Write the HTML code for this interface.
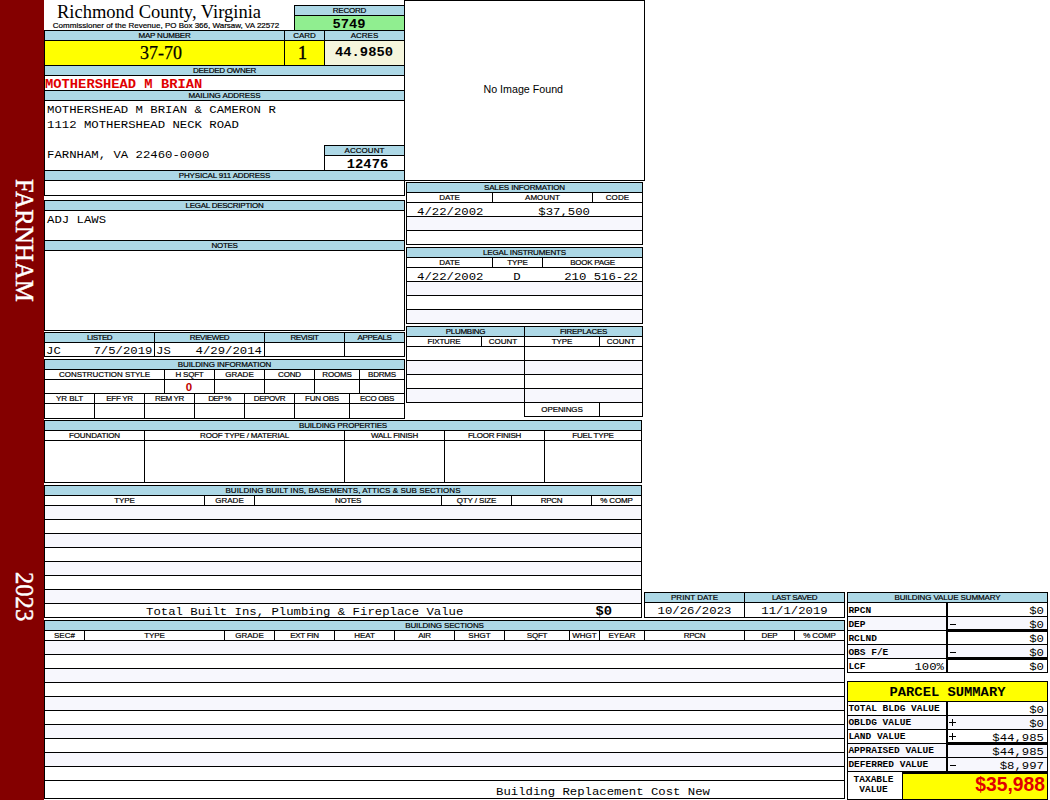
<!DOCTYPE html>
<html><head><meta charset="utf-8"><title>Property Card</title>
<style>
html,body{margin:0;padding:0;background:#fff;}
body{width:1050px;height:800px;position:relative;overflow:hidden;font-family:"Liberation Sans",sans-serif;}
.b{position:absolute;box-sizing:border-box;border:1px solid #000;overflow:hidden;}
.l{font-family:"Liberation Sans",sans-serif;font-size:8px;-webkit-text-stroke:.2px #000;padding-top:.15px;text-align:center;color:#000;white-space:nowrap;}
.t{position:absolute;white-space:pre;color:#000;line-height:1.15;}
.m{font-family:"Liberation Mono",monospace;font-size:12.3px;transform:translateY(1.8px) scaleY(.9);transform-origin:50% 45%;}
.mb{font-family:"Liberation Mono",monospace;font-weight:bold;transform:translateY(1px) scaleY(.86);transform-origin:50% 45%;}
.sb{font-family:"Liberation Mono",monospace;font-weight:bold;font-size:9.5px;}
.s{font-family:"Liberation Serif",serif;}
.a{font-family:"Liberation Sans",sans-serif;}
.ab{font-family:"Liberation Sans",sans-serif;font-weight:bold;}
.v{position:absolute;writing-mode:vertical-rl;font-family:"Liberation Serif",serif;font-size:24.6px;-webkit-text-stroke:.45px #fff;color:#fff;line-height:1;white-space:nowrap;}
.k{position:absolute;background:#000;}
</style></head>
<body>
<div style="position:absolute;left:0;top:0;width:44px;height:800px;background:#840000"></div>
<div class="v" style="left:11.2px;top:179.2px;letter-spacing:.3px;">FARNHAM</div>
<div class="v" style="left:11.2px;top:571.6px;">2023</div>
<div class="t s" style="left:44px;width:230px;text-align:center;top:2.3px;font-size:18.5px;">Richmond County, Virginia</div>
<div class="t a" style="left:44px;width:244px;text-align:center;top:20.5px;font-size:8px;-webkit-text-stroke:.2px #000;">Commissioner of the Revenue, PO Box 366, Warsaw, VA 22572</div>
<div class="b l" style="left:294px;top:5px;width:111px;height:11px;background:#add8e6;line-height:9px;letter-spacing:-0.22px;">RECORD</div>
<div class="b " style="left:294px;top:15px;width:111px;height:16px;background:#90ee90;"></div>
<div class="t mb" style="left:294px;width:110px;text-align:center;top:17px;font-size:13.8px;">5749</div>
<div class="b l" style="left:44px;top:30px;width:241px;height:11px;background:#add8e6;line-height:9px;letter-spacing:-0.21px;">MAP NUMBER</div>
<div class="b l" style="left:284px;top:30px;width:41px;height:11px;background:#add8e6;line-height:9px;letter-spacing:-0.07px;">CARD</div>
<div class="b l" style="left:324px;top:30px;width:81px;height:11px;background:#add8e6;line-height:9px;letter-spacing:-0.04px;">ACRES</div>
<div class="b " style="left:44px;top:40px;width:241px;height:26px;background:#ffff00;"></div>
<div class="b " style="left:284px;top:40px;width:41px;height:26px;background:#ffff00;"></div>
<div class="b " style="left:324px;top:40px;width:81px;height:26px;background:#f5f5dc;"></div>
<div class="t s" style="left:41px;width:240px;text-align:center;top:42.5px;font-size:18px;-webkit-text-stroke:.25px #000;">37-70</div>
<div class="t s" style="left:282.5px;width:40.0px;text-align:center;top:42.5px;font-size:18px;-webkit-text-stroke:.5px #000;">1</div>
<div class="t mb" style="left:324px;width:80px;text-align:center;top:45px;font-size:13.8px;">44.9850</div>
<div class="b l" style="left:44px;top:65px;width:361px;height:11px;background:#add8e6;line-height:9px;letter-spacing:-0.28px;">DEEDED OWNER</div>
<div class="b " style="left:44px;top:75px;width:361px;height:16px;background:#fff;"></div>
<div class="t mb" style="left:45px;top:77px;color:#e00000;font-size:13.8px;">MOTHERSHEAD M BRIAN</div>
<div class="b l" style="left:44px;top:90px;width:361px;height:11px;background:#add8e6;line-height:9px;letter-spacing:-0.09px;">MAILING ADDRESS</div>
<div class="b " style="left:44px;top:100px;width:361px;height:71px;background:#fff;"></div>
<div class="t m" style="left:47px;top:102px;">MOTHERSHEAD M BRIAN &amp; CAMERON R</div>
<div class="t m" style="left:47px;top:117px;">1112 MOTHERSHEAD NECK ROAD</div>
<div class="t m" style="left:47px;top:147px;">FARNHAM, VA 22460-0000</div>
<div class="b l" style="left:324px;top:145px;width:81px;height:11px;background:#add8e6;line-height:9px;letter-spacing:0.06px;">ACCOUNT</div>
<div class="b " style="left:324px;top:155px;width:81px;height:16px;background:#fff;"></div>
<div class="t mb" style="left:327.5px;width:80.0px;text-align:center;top:157px;font-size:13.8px;">12476</div>
<div class="b l" style="left:44px;top:170px;width:361px;height:11px;background:#add8e6;line-height:9px;letter-spacing:-0.17px;">PHYSICAL 911 ADDRESS</div>
<div class="b " style="left:44px;top:180px;width:361px;height:16px;background:#fff;"></div>
<div class="b l" style="left:44px;top:200px;width:361px;height:11px;background:#add8e6;line-height:9px;letter-spacing:-0.26px;">LEGAL DESCRIPTION</div>
<div class="b " style="left:44px;top:210px;width:361px;height:31px;background:#fff;"></div>
<div class="t m" style="left:47px;top:212px;">ADJ LAWS</div>
<div class="b l" style="left:44px;top:240px;width:361px;height:11px;background:#add8e6;line-height:9px;letter-spacing:-0.32px;">NOTES</div>
<div class="b " style="left:44px;top:250px;width:361px;height:81px;background:#fff;"></div>
<div class="b l" style="left:44px;top:332px;width:111px;height:11px;background:#add8e6;line-height:9px;letter-spacing:-0.50px;">LISTED</div>
<div class="b " style="left:44px;top:342px;width:111px;height:15px;background:#fff;"></div>
<div class="b l" style="left:154px;top:332px;width:111px;height:11px;background:#add8e6;line-height:9px;letter-spacing:-0.42px;">REVIEWED</div>
<div class="b " style="left:154px;top:342px;width:111px;height:15px;background:#fff;"></div>
<div class="b l" style="left:264px;top:332px;width:81px;height:11px;background:#add8e6;line-height:9px;letter-spacing:-0.44px;">REVISIT</div>
<div class="b " style="left:264px;top:342px;width:81px;height:15px;background:#fff;"></div>
<div class="b l" style="left:344px;top:332px;width:61px;height:11px;background:#add8e6;line-height:9px;letter-spacing:-0.36px;">APPEALS</div>
<div class="b " style="left:344px;top:342px;width:61px;height:15px;background:#fff;"></div>
<div class="t m" style="left:46px;top:342.5px;">JC</div>
<div class="t m" style="right:897.5px;top:342.5px;">7/5/2019</div>
<div class="t m" style="left:156px;top:342.5px;">JS</div>
<div class="t m" style="right:788px;top:342.5px;">4/29/2014</div>
<div class="b l" style="left:44px;top:359px;width:361px;height:11px;background:#add8e6;line-height:9px;letter-spacing:-0.10px;">BUILDING INFORMATION</div>
<div class="b l" style="left:44px;top:369px;width:121px;height:11px;background:#fff;line-height:9px;letter-spacing:-0.06px;">CONSTRUCTION STYLE</div>
<div class="b " style="left:44px;top:379px;width:121px;height:15px;background:#fff;"></div>
<div class="b l" style="left:164px;top:369px;width:51px;height:11px;background:#fff;line-height:9px;letter-spacing:-0.25px;">H SQFT</div>
<div class="b " style="left:164px;top:379px;width:51px;height:15px;background:#fff;"></div>
<div class="b l" style="left:214px;top:369px;width:51px;height:11px;background:#fff;line-height:9px;letter-spacing:0.00px;">GRADE</div>
<div class="b " style="left:214px;top:379px;width:51px;height:15px;background:#fff;"></div>
<div class="b l" style="left:264px;top:369px;width:51px;height:11px;background:#fff;line-height:9px;letter-spacing:-0.15px;">COND</div>
<div class="b " style="left:264px;top:379px;width:51px;height:15px;background:#fff;"></div>
<div class="b l" style="left:314px;top:369px;width:46px;height:11px;background:#fff;line-height:9px;letter-spacing:-0.16px;">ROOMS</div>
<div class="b " style="left:314px;top:379px;width:46px;height:15px;background:#fff;"></div>
<div class="b l" style="left:359px;top:369px;width:46px;height:11px;background:#fff;line-height:9px;letter-spacing:-0.18px;">BDRMS</div>
<div class="b " style="left:359px;top:379px;width:46px;height:15px;background:#fff;"></div>
<div class="t ab" style="left:164px;width:50px;text-align:center;top:380.5px;color:#c00000;font-size:11.5px;">0</div>
<div class="b l" style="left:44px;top:393px;width:51px;height:11px;background:#fff;line-height:9px;letter-spacing:-0.07px;">YR BLT</div>
<div class="b " style="left:44px;top:403px;width:51px;height:16px;background:#fff;"></div>
<div class="b l" style="left:94px;top:393px;width:51px;height:11px;background:#fff;line-height:9px;letter-spacing:-0.32px;">EFF YR</div>
<div class="b " style="left:94px;top:403px;width:51px;height:16px;background:#fff;"></div>
<div class="b l" style="left:144px;top:393px;width:51px;height:11px;background:#fff;line-height:9px;letter-spacing:-0.33px;">REM YR</div>
<div class="b " style="left:144px;top:403px;width:51px;height:16px;background:#fff;"></div>
<div class="b l" style="left:194px;top:393px;width:51px;height:11px;background:#fff;line-height:9px;letter-spacing:-0.60px;">DEP %</div>
<div class="b " style="left:194px;top:403px;width:51px;height:16px;background:#fff;"></div>
<div class="b l" style="left:244px;top:393px;width:51px;height:11px;background:#fff;line-height:9px;letter-spacing:-0.40px;">DEPOVR</div>
<div class="b " style="left:244px;top:403px;width:51px;height:16px;background:#fff;"></div>
<div class="b l" style="left:294px;top:393px;width:56px;height:11px;background:#fff;line-height:9px;letter-spacing:-0.23px;">FUN OBS</div>
<div class="b " style="left:294px;top:403px;width:56px;height:16px;background:#fff;"></div>
<div class="b l" style="left:349px;top:393px;width:56px;height:11px;background:#fff;line-height:9px;letter-spacing:-0.36px;">ECO OBS</div>
<div class="b " style="left:349px;top:403px;width:56px;height:16px;background:#fff;"></div>
<div class="b l" style="left:44px;top:420px;width:598px;height:11px;background:#add8e6;line-height:9px;letter-spacing:-0.18px;">BUILDING PROPERTIES</div>
<div class="b l" style="left:44px;top:430px;width:101px;height:11px;background:#fff;line-height:9px;letter-spacing:-0.13px;">FOUNDATION</div>
<div class="b " style="left:44px;top:440px;width:101px;height:43px;background:#fff;"></div>
<div class="b l" style="left:144px;top:430px;width:201px;height:11px;background:#fff;line-height:9px;letter-spacing:-0.16px;">ROOF TYPE / MATERIAL</div>
<div class="b " style="left:144px;top:440px;width:201px;height:43px;background:#fff;"></div>
<div class="b l" style="left:344px;top:430px;width:101px;height:11px;background:#fff;line-height:9px;letter-spacing:-0.24px;">WALL FINISH</div>
<div class="b " style="left:344px;top:440px;width:101px;height:43px;background:#fff;"></div>
<div class="b l" style="left:444px;top:430px;width:101px;height:11px;background:#fff;line-height:9px;letter-spacing:-0.23px;">FLOOR FINISH</div>
<div class="b " style="left:444px;top:440px;width:101px;height:43px;background:#fff;"></div>
<div class="b l" style="left:544px;top:430px;width:98px;height:11px;background:#fff;line-height:9px;letter-spacing:-0.18px;">FUEL TYPE</div>
<div class="b " style="left:544px;top:440px;width:98px;height:43px;background:#fff;"></div>
<div class="b l" style="left:44px;top:485px;width:598px;height:11px;background:#add8e6;line-height:9px;letter-spacing:0.05px;">BUILDING BUILT INS, BASEMENTS, ATTICS &amp; SUB SECTIONS</div>
<div class="b l" style="left:44px;top:495px;width:161px;height:11px;background:#fff;line-height:9px;letter-spacing:-0.12px;">TYPE</div>
<div class="b l" style="left:204px;top:495px;width:51px;height:11px;background:#fff;line-height:9px;letter-spacing:0.00px;">GRADE</div>
<div class="b l" style="left:254px;top:495px;width:188px;height:11px;background:#fff;line-height:9px;letter-spacing:-0.32px;">NOTES</div>
<div class="b l" style="left:441px;top:495px;width:71px;height:11px;background:#fff;line-height:9px;letter-spacing:-0.11px;">QTY / SIZE</div>
<div class="b l" style="left:511px;top:495px;width:81px;height:11px;background:#fff;line-height:9px;letter-spacing:-0.30px;">RPCN</div>
<div class="b l" style="left:591px;top:495px;width:51px;height:11px;background:#fff;line-height:9px;letter-spacing:-0.18px;">% COMP</div>
<div class="b " style="left:44px;top:505px;width:598px;height:15px;background:#f7f7fd;"></div>
<div class="b " style="left:44px;top:519px;width:598px;height:15px;background:#fff;"></div>
<div class="b " style="left:44px;top:533px;width:598px;height:15px;background:#f7f7fd;"></div>
<div class="b " style="left:44px;top:547px;width:598px;height:15px;background:#fff;"></div>
<div class="b " style="left:44px;top:561px;width:598px;height:15px;background:#f7f7fd;"></div>
<div class="b " style="left:44px;top:575px;width:598px;height:15px;background:#fff;"></div>
<div class="b " style="left:44px;top:589px;width:598px;height:15px;background:#f7f7fd;"></div>
<div class="b " style="left:44px;top:603px;width:598px;height:15px;background:#fff;"></div>
<div class="t m" style="left:146px;top:604px;">Total Built Ins, Plumbing &amp; Fireplace Value</div>
<div class="t mb" style="right:438px;top:604px;font-size:13.8px;">$0</div>
<div class="b l" style="left:44px;top:620px;width:801px;height:11px;background:#add8e6;line-height:9px;letter-spacing:-0.14px;">BUILDING SECTIONS</div>
<div class="b l" style="left:44px;top:630px;width:41px;height:11px;background:#fff;line-height:9px;letter-spacing:0.03px;">SEC#</div>
<div class="b l" style="left:84px;top:630px;width:141px;height:11px;background:#fff;line-height:9px;letter-spacing:-0.12px;">TYPE</div>
<div class="b l" style="left:224px;top:630px;width:51px;height:11px;background:#fff;line-height:9px;letter-spacing:0.00px;">GRADE</div>
<div class="b l" style="left:274px;top:630px;width:61px;height:11px;background:#fff;line-height:9px;letter-spacing:-0.29px;">EXT FIN</div>
<div class="b l" style="left:334px;top:630px;width:61px;height:11px;background:#fff;line-height:9px;letter-spacing:-0.05px;">HEAT</div>
<div class="b l" style="left:394px;top:630px;width:61px;height:11px;background:#fff;line-height:9px;letter-spacing:-0.23px;">AIR</div>
<div class="b l" style="left:454px;top:630px;width:51px;height:11px;background:#fff;line-height:9px;letter-spacing:0.03px;">SHGT</div>
<div class="b l" style="left:504px;top:630px;width:66px;height:11px;background:#fff;line-height:9px;letter-spacing:-0.23px;">SQFT</div>
<div class="b l" style="left:569px;top:630px;width:31px;height:11px;background:#fff;line-height:9px;letter-spacing:0.00px;">WHGT</div>
<div class="b l" style="left:599px;top:630px;width:46px;height:11px;background:#fff;line-height:9px;letter-spacing:-0.06px;">EYEAR</div>
<div class="b l" style="left:644px;top:630px;width:101px;height:11px;background:#fff;line-height:9px;letter-spacing:-0.30px;">RPCN</div>
<div class="b l" style="left:744px;top:630px;width:51px;height:11px;background:#fff;line-height:9px;letter-spacing:-0.20px;">DEP</div>
<div class="b l" style="left:794px;top:630px;width:51px;height:11px;background:#fff;line-height:9px;letter-spacing:-0.18px;">% COMP</div>
<div class="b " style="left:44px;top:640px;width:801px;height:15px;background:#f7f7fd;"></div>
<div class="b " style="left:44px;top:654px;width:801px;height:15px;background:#fff;"></div>
<div class="b " style="left:44px;top:668px;width:801px;height:15px;background:#f7f7fd;"></div>
<div class="b " style="left:44px;top:682px;width:801px;height:15px;background:#fff;"></div>
<div class="b " style="left:44px;top:696px;width:801px;height:15px;background:#f7f7fd;"></div>
<div class="b " style="left:44px;top:710px;width:801px;height:15px;background:#fff;"></div>
<div class="b " style="left:44px;top:724px;width:801px;height:15px;background:#f7f7fd;"></div>
<div class="b " style="left:44px;top:738px;width:801px;height:15px;background:#fff;"></div>
<div class="b " style="left:44px;top:752px;width:801px;height:15px;background:#f7f7fd;"></div>
<div class="b " style="left:44px;top:766px;width:801px;height:15px;background:#fff;"></div>
<div class="b " style="left:44px;top:780px;width:801px;height:19px;background:#fff;"></div>
<div class="t m" style="left:496px;top:784px;">Building Replacement Cost New</div>
<div class="b " style="left:404px;top:0px;width:241px;height:181px;background:#fff;"></div>
<div class="t a" style="left:403px;width:240.5px;text-align:center;top:83.3px;font-size:10.7px;">No Image Found</div>
<div class="b l" style="left:406px;top:182px;width:237px;height:11px;background:#add8e6;line-height:9px;letter-spacing:-0.14px;">SALES INFORMATION</div>
<div class="b l" style="left:406px;top:192px;width:87px;height:11px;background:#fff;line-height:9px;letter-spacing:-0.05px;">DATE</div>
<div class="b l" style="left:492px;top:192px;width:101px;height:11px;background:#fff;line-height:9px;letter-spacing:0.05px;">AMOUNT</div>
<div class="b l" style="left:592px;top:192px;width:51px;height:11px;background:#fff;line-height:9px;letter-spacing:0.10px;">CODE</div>
<div class="b " style="left:406px;top:202px;width:237px;height:15px;background:#fff;"></div>
<div class="b " style="left:406px;top:216px;width:237px;height:15px;background:#f7f7fd;"></div>
<div class="b " style="left:406px;top:230px;width:237px;height:15px;background:#fff;"></div>
<div class="t m" style="left:417px;top:204px;">4/22/2002</div>
<div class="t m" style="right:460px;top:204px;">$37,500</div>
<div class="b l" style="left:406px;top:247px;width:237px;height:11px;background:#add8e6;line-height:9px;letter-spacing:-0.15px;">LEGAL INSTRUMENTS</div>
<div class="b l" style="left:406px;top:257px;width:87px;height:11px;background:#fff;line-height:9px;letter-spacing:-0.05px;">DATE</div>
<div class="b l" style="left:492px;top:257px;width:51px;height:11px;background:#fff;line-height:9px;letter-spacing:-0.12px;">TYPE</div>
<div class="b l" style="left:542px;top:257px;width:101px;height:11px;background:#fff;line-height:9px;letter-spacing:-0.28px;">BOOK PAGE</div>
<div class="b " style="left:406px;top:267px;width:237px;height:15px;background:#fff;"></div>
<div class="b " style="left:406px;top:281px;width:237px;height:15px;background:#f7f7fd;"></div>
<div class="b " style="left:406px;top:295px;width:237px;height:15px;background:#fff;"></div>
<div class="b " style="left:406px;top:309px;width:237px;height:15px;background:#f7f7fd;"></div>
<div class="t m" style="left:417px;top:269px;">4/22/2002</div>
<div class="t m" style="left:492px;width:50px;text-align:center;top:269px;">D</div>
<div class="t m" style="right:412px;top:269px;">210 516-22</div>
<div class="b l" style="left:406px;top:326px;width:119px;height:11px;background:#add8e6;line-height:9px;letter-spacing:-0.28px;">PLUMBING</div>
<div class="b l" style="left:524px;top:326px;width:119px;height:11px;background:#add8e6;line-height:9px;letter-spacing:-0.28px;">FIREPLACES</div>
<div class="b l" style="left:406px;top:336px;width:76px;height:11px;background:#fff;line-height:9px;letter-spacing:-0.17px;">FIXTURE</div>
<div class="b l" style="left:481px;top:336px;width:44px;height:11px;background:#fff;line-height:9px;letter-spacing:-0.02px;">COUNT</div>
<div class="b l" style="left:524px;top:336px;width:76px;height:11px;background:#fff;line-height:9px;letter-spacing:-0.12px;">TYPE</div>
<div class="b l" style="left:599px;top:336px;width:44px;height:11px;background:#fff;line-height:9px;letter-spacing:-0.02px;">COUNT</div>
<div class="b " style="left:406px;top:346px;width:119px;height:15px;background:#fff;"></div>
<div class="b " style="left:524px;top:346px;width:119px;height:15px;background:#fff;"></div>
<div class="b " style="left:406px;top:360px;width:119px;height:15px;background:#f7f7fd;"></div>
<div class="b " style="left:524px;top:360px;width:119px;height:15px;background:#f7f7fd;"></div>
<div class="b " style="left:406px;top:374px;width:119px;height:15px;background:#fff;"></div>
<div class="b " style="left:524px;top:374px;width:119px;height:15px;background:#fff;"></div>
<div class="b " style="left:406px;top:388px;width:119px;height:15px;background:#f7f7fd;"></div>
<div class="b " style="left:524px;top:388px;width:119px;height:15px;background:#f7f7fd;"></div>
<div class="b l" style="left:524px;top:402px;width:76px;height:15px;background:#fff;line-height:13px;letter-spacing:-.1px;">OPENINGS</div>
<div class="b " style="left:599px;top:402px;width:44px;height:15px;background:#fff;"></div>
<div class="b l" style="left:644px;top:592px;width:101px;height:11px;background:#add8e6;line-height:9px;letter-spacing:0.02px;">PRINT DATE</div>
<div class="b l" style="left:744px;top:592px;width:101px;height:11px;background:#add8e6;line-height:9px;letter-spacing:-0.34px;">LAST SAVED</div>
<div class="b " style="left:644px;top:602px;width:101px;height:16px;background:#fff;"></div>
<div class="b " style="left:744px;top:602px;width:101px;height:16px;background:#fff;"></div>
<div class="t m" style="left:644px;width:101px;text-align:center;top:603px;">10/26/2023</div>
<div class="t m" style="left:744px;width:101px;text-align:center;top:603px;">11/1/2019</div>
<div class="b l" style="left:847px;top:592px;width:201px;height:11px;background:#add8e6;line-height:9px;letter-spacing:-0.12px;">BUILDING VALUE SUMMARY</div>
<div class="b " style="left:847px;top:602px;width:101px;height:15px;background:#fff;"></div>
<div class="b " style="left:947px;top:602px;width:101px;height:15px;background:#fff;"></div>
<div class="t sb" style="left:848.4px;top:605.7px;">RPCN</div>
<div class="t m" style="right:6px;top:603px;">$0</div>
<div class="b " style="left:847px;top:616px;width:101px;height:15px;background:#f7f7fd;"></div>
<div class="b " style="left:947px;top:616px;width:101px;height:15px;background:#f7f7fd;"></div>
<div class="t sb" style="left:848.4px;top:619.7px;">DEP</div>
<div class="t m" style="right:6px;top:617px;">$0</div>
<div class="k" style="left:950px;top:624px;width:6px;height:1px"></div>
<div class="b " style="left:847px;top:630px;width:101px;height:15px;background:#fff;"></div>
<div class="b " style="left:947px;top:630px;width:101px;height:15px;background:#fff;"></div>
<div class="t sb" style="left:848.4px;top:633.7px;">RCLND</div>
<div class="t m" style="right:6px;top:631px;">$0</div>
<div class="b " style="left:847px;top:644px;width:101px;height:15px;background:#f7f7fd;"></div>
<div class="b " style="left:947px;top:644px;width:101px;height:15px;background:#f7f7fd;"></div>
<div class="t sb" style="left:848.4px;top:647.7px;">OBS F/E</div>
<div class="t m" style="right:6px;top:645px;">$0</div>
<div class="k" style="left:950px;top:652px;width:6px;height:1px"></div>
<div class="b " style="left:847px;top:658px;width:101px;height:15px;background:#fff;"></div>
<div class="b " style="left:947px;top:658px;width:101px;height:15px;background:#fff;"></div>
<div class="t sb" style="left:848.4px;top:661.7px;">LCF</div>
<div class="t m" style="right:6px;top:659px;">$0</div>
<div class="t m" style="right:106px;top:659px;">100%</div>
<div class="k" style="left:947px;top:629px;width:101px;height:3px"></div>
<div class="k" style="left:947px;top:657px;width:101px;height:3px"></div>
<div class="k" style="left:946px;top:602px;width:2px;height:71px"></div>
<div class="b " style="left:847px;top:681px;width:201px;height:21px;background:#ffff00;"></div>
<div class="t mb" style="left:847px;width:201px;text-align:center;top:685px;font-size:13.8px;">PARCEL SUMMARY</div>
<div class="b " style="left:847px;top:701px;width:101px;height:15px;background:#fff;"></div>
<div class="b " style="left:947px;top:701px;width:101px;height:15px;background:#fff;"></div>
<div class="t sb" style="left:848.4px;top:703.8px;">TOTAL BLDG VALUE</div>
<div class="t m" style="right:6px;top:702px;">$0</div>
<div class="b " style="left:847px;top:715px;width:101px;height:15px;background:#f7f7fd;"></div>
<div class="b " style="left:947px;top:715px;width:101px;height:15px;background:#f7f7fd;"></div>
<div class="t sb" style="left:848.4px;top:717.8px;">OBLDG VALUE</div>
<div class="t m" style="right:6px;top:716px;">$0</div>
<div class="k" style="left:949px;top:722px;width:7px;height:1px"></div>
<div class="k" style="left:952px;top:719px;width:1px;height:7px"></div>
<div class="b " style="left:847px;top:729px;width:101px;height:15px;background:#fff;"></div>
<div class="b " style="left:947px;top:729px;width:101px;height:15px;background:#fff;"></div>
<div class="t sb" style="left:848.4px;top:731.8px;">LAND VALUE</div>
<div class="t m" style="right:6px;top:730px;">$44,985</div>
<div class="k" style="left:949px;top:736px;width:7px;height:1px"></div>
<div class="k" style="left:952px;top:733px;width:1px;height:7px"></div>
<div class="b " style="left:847px;top:743px;width:101px;height:15px;background:#f7f7fd;"></div>
<div class="b " style="left:947px;top:743px;width:101px;height:15px;background:#f7f7fd;"></div>
<div class="t sb" style="left:848.4px;top:745.8px;">APPRAISED VALUE</div>
<div class="t m" style="right:6px;top:744px;">$44,985</div>
<div class="b " style="left:847px;top:757px;width:101px;height:15px;background:#f7f7fd;"></div>
<div class="b " style="left:947px;top:757px;width:101px;height:15px;background:#f7f7fd;"></div>
<div class="t sb" style="left:848.4px;top:759.8px;">DEFERRED VALUE</div>
<div class="t m" style="right:6px;top:758px;">$8,997</div>
<div class="k" style="left:950px;top:765px;width:6px;height:1px"></div>
<div class="k" style="left:947px;top:742px;width:101px;height:3px"></div>
<div class="k" style="left:946px;top:701px;width:2px;height:71px"></div>
<div class="b " style="left:847px;top:771px;width:56px;height:29px;background:#fff;"></div>
<div class="b " style="left:902px;top:771px;width:146px;height:29px;background:#ffff00;"></div>
<div class="k" style="left:902px;top:771px;width:146px;height:3px"></div>
<div class="t sb" style="left:845.5px;width:56.0px;text-align:center;top:775px;">TAXABLE</div>
<div class="t sb" style="left:845.5px;width:56.0px;text-align:center;top:785px;">VALUE</div>
<div class="t ab" style="right:5px;top:774px;color:#e00000;font-size:19.3px;">$35,988</div>
</body></html>
